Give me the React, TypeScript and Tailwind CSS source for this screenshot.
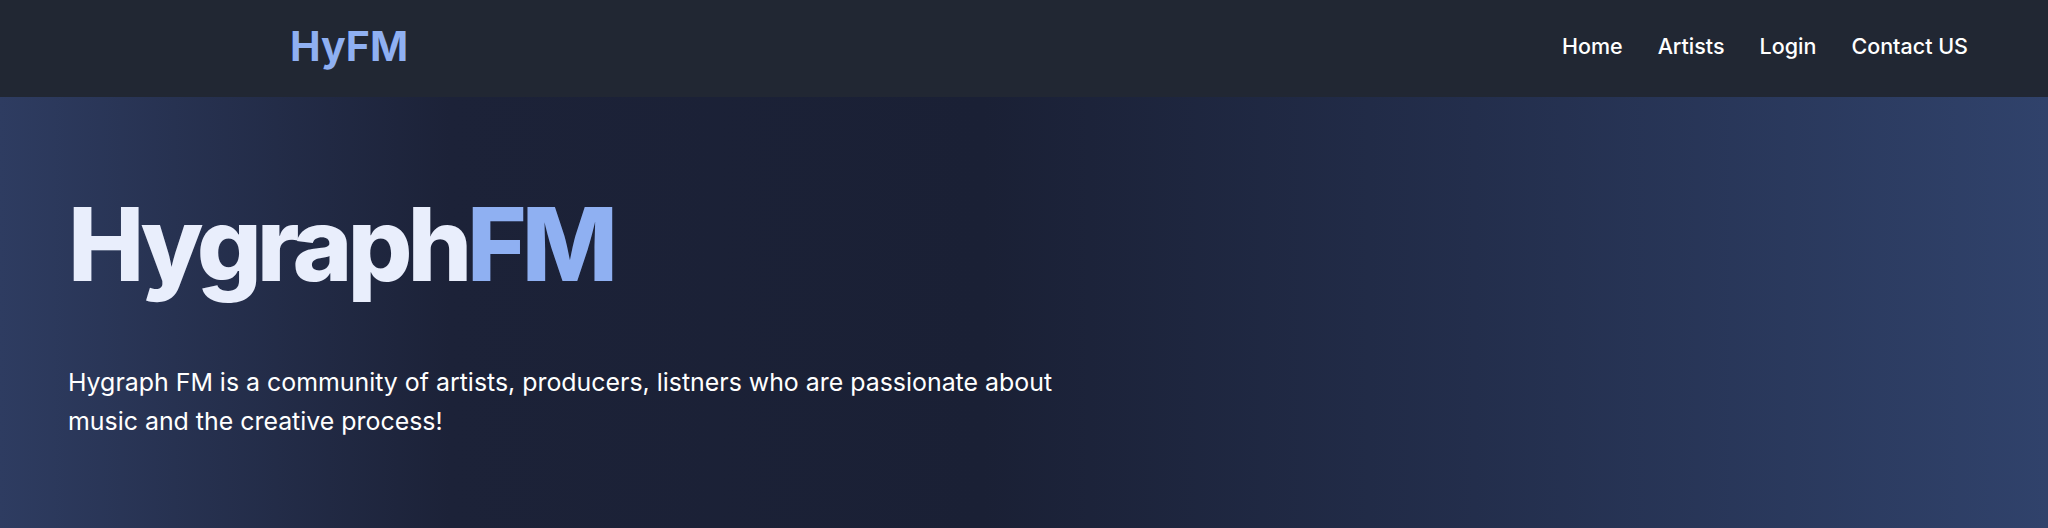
export default function App() {
  const links = ["Home", "Artists", "Login", "Contact US"];

  return (
    <div className="min-h-screen w-full font-['Inter','Noto_Sans',sans-serif]">
      <header className="h-[97px] w-full bg-[#212733]">
        <div className="flex h-full items-center justify-between pb-1 pl-[290px] pr-20">
          <a href="#" className="text-[41px] font-bold text-[#8fb0f2]">
            HyFM
          </a>
          <nav className="flex items-center gap-[35px]">
            {links.map((link) => (
              <a key={link} href="#" className="text-[21.5px] font-medium text-white">
                {link}
              </a>
            ))}
          </nav>
        </div>
      </header>

      <section className="h-[431px] w-full bg-[linear-gradient(to_right,#2e3c61_0%,#1c2238_22%,#1a2035_48%,#232e4c_72%,#30426b_100%)] px-[68px] pt-[96px]">
        <h1 className="text-[102px] font-extrabold leading-none tracking-tighter text-[#e9eefc]">
          Hygraph<span className="text-[#8fb0f2]">FM</span>
        </h1>
        <p className="mt-[68px] max-w-[1000px] text-[24.9px] leading-[39px] text-white">
          Hygraph FM is a community of artists, producers, listners who are passionate about music and
          the creative process!
        </p>
      </section>
    </div>
  );
}
